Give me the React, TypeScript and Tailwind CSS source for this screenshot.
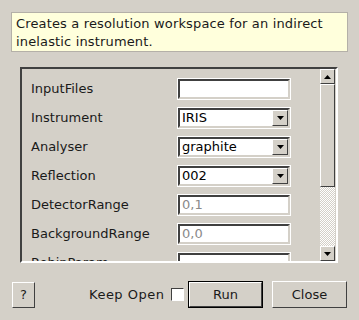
import React, { useState } from 'react';

interface Prop {
  name: string;
  kind: 'text' | 'combo';
  value: string;
  placeholder?: boolean;
}

const props: Prop[] = [
  { name: 'InputFiles', kind: 'text', value: '' },
  { name: 'Instrument', kind: 'combo', value: 'IRIS' },
  { name: 'Analyser', kind: 'combo', value: 'graphite' },
  { name: 'Reflection', kind: 'combo', value: '002' },
  { name: 'DetectorRange', kind: 'text', value: '0,1', placeholder: true },
  { name: 'BackgroundRange', kind: 'text', value: '0,0', placeholder: true },
  { name: 'RebinParam', kind: 'text', value: '' },
];

const sunken = 'border-2 border-t-[#404040] border-l-[#404040] border-b-[#d4d0c8] border-r-[#d4d0c8] outline outline-1 outline-white';
const raised = 'border border-t-white border-l-white border-b-[#404040] border-r-[#404040] bg-[#d4d0c8]';

const Arrow = ({ up }: { up?: boolean }) => (
  <svg width="7" height="4" viewBox="0 0 7 4">
    <path d={up ? 'M0 4 L3.5 0 L7 4 Z' : 'M0 0 L7 0 L3.5 4 Z'} fill="#000" />
  </svg>
);

const Field = ({ p }: { p: Prop }) => {
  if (p.kind === 'combo') {
    return (
      <div className={`w-[112px] h-[20px] bg-white flex items-center ${sunken}`}>
        <span className="flex-1 pl-[2px] text-black leading-none">{p.value}</span>
        <div className={`w-[16px] h-[16px] flex items-center justify-center ${raised}`}>
          <Arrow />
        </div>
      </div>
    );
  }
  return (
    <div className={`w-[112px] h-[20px] bg-white flex items-center ${sunken}`}>
      <span className="pl-[2px] text-[#8a8a8a] leading-none">{p.value}</span>
    </div>
  );
};

const App = () => {
  const [keepOpen, setKeepOpen] = useState(false);

  return (
    <div
      className="w-[359px] h-[320px] bg-[#d4d0c8] text-[13px] text-[#1a1a1a] overflow-hidden flex flex-col"
      style={{ fontFamily: '"DejaVu Sans", sans-serif' }}
    >
      <div className="mt-[12px] ml-[11px] w-[337px] h-[40px] bg-[#ffffdc] border border-[#b4b0a8] px-[4px] pt-[2px] leading-[18px] tracking-[0.15px]">
        Creates a resolution workspace for an indirect inelastic instrument.
      </div>

      <div className="mt-[15px] ml-[20px] w-[318px] h-[196px] flex border-2 border-t-[#404040] border-l-[#404040] border-b-white border-r-white">
        <div className="flex-1 overflow-hidden pt-[5px] pl-[9px]">
          {props.map((p) => (
            <div key={p.name} className="h-[29px] flex items-center">
              <span className="w-[147px]">{p.name}</span>
              <Field p={p} />
            </div>
          ))}
        </div>
        <div className="w-[15px] flex flex-col mr-[1px]">
          <div className={`h-[15px] flex items-center justify-center ${raised}`}>
            <Arrow up />
          </div>
          <div className={`h-[103px] ${raised}`} />
          <div className="flex-1 bg-[repeating-conic-gradient(#ffffff_0_25%,#d4d0c8_0_50%)] bg-[length:2px_2px]" />
          <div className={`h-[15px] flex items-center justify-center ${raised}`}>
            <Arrow />
          </div>
        </div>
      </div>

      <div className="mt-[18px] flex items-center h-[27px]">
        <button className={`ml-[12px] w-[23px] h-[26px] flex items-center justify-center ${raised}`}>?</button>
        <span className="ml-[54px] w-[76px] whitespace-nowrap tracking-[0.5px]">Keep Open</span>
        <button
          onClick={() => setKeepOpen(!keepOpen)}
          className="ml-[6px] w-[13px] h-[13px] bg-white border border-t-[#404040] border-l-[#404040] border-b-white border-r-white"
        >
          {keepOpen ? '✓' : ''}
        </button>
        <button className="ml-[4px] w-[75px] h-[27px] border border-black flex">
          <span className={`flex-1 flex items-center justify-center ${raised}`}>Run</span>
        </button>
        <button className={`ml-[9px] w-[75px] h-[27px] flex items-center justify-center ${raised}`}>Close</button>
      </div>
    </div>
  );
};

export default App;
